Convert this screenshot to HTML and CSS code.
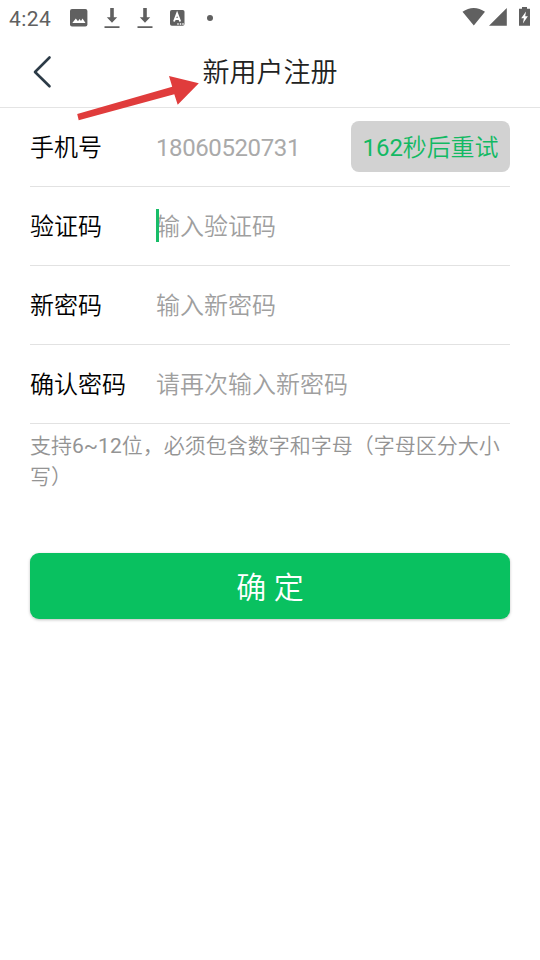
FILE: index.html
```html
<!DOCTYPE html>
<html lang="zh-CN">
<head>
<meta charset="utf-8">
<title>新用户注册</title>
<link rel="stylesheet" href="styles.css">
</head>
<body>
<div class="status">
  <span class="clock">4:24</span>
  <svg class="photo" width="18" height="18" viewBox="0 0 18 18"><rect width="17.4" height="17.4" rx="2" fill="#606060"/><path d="m2.300 14 3.500-4.500L8 12.300 9.500 10l1.500 2 1.500-2.500 3 4.500z" fill="#fff"/></svg>
  <svg class="download" width="16" height="21" viewBox="0 0 16 21"><path d="M6.200 0h3.600v9.300h3.400L8 14.700 2.800 9.300h3.400zM.5 18.200h15V20H.5z" fill="#606060"/></svg>
  <svg class="download" width="16" height="21" viewBox="0 0 16 21"><path d="M6.200 0h3.600v9.300h3.400L8 14.700 2.800 9.300h3.400zM.5 18.200h15V20H.5z" fill="#606060"/></svg>
  <svg class="keyboard" width="15" height="16" viewBox="0 0 15 16"><rect width="14.5" height="15.7" rx="1.8" fill="#606060"/><path d="m4 11.500 3.100-8 3.100 8M5 9h4.200" fill="none" stroke="#fff" stroke-width="1.900"/><path d="M7.300 13.300h1.400v1.400H7.300zm2.500 0h1.400v1.400H9.800zm2.500 0h1.400v1.400h-1.400z" fill="#fff"/></svg>
  <span class="dot"></span>
  <svg class="signals" width="68" height="22" viewBox="0 0 68 22"><path d="M.500 4.700C7.500-.4 16-.4 23 4.700L11.800 18.400zM27 18.800 44.800 1v17.800zM57 1.700h3V0h5v1.700h3v17.100H57z" fill="#606060"/><path d="m64 4.500-4.800 6.700h2.700l-1 5.200 5-7.200h-2.700z" fill="#fff"/></svg>
</div>
<header class="header">
  <svg class="back" width="20" height="34" viewBox="0 0 20 34"><path d="M17.500 2.500 3 17l14.500 14.300" fill="none" stroke="#2c3b47" stroke-width="2.600" stroke-linecap="round" stroke-linejoin="round"/></svg>
  <h1 class="title">新用户注册</h1>
</header>
<svg class="pointer" width="124" height="48" viewBox="0 0 124 48"><path d="m2.200 41.100 95-27.300L94 3l29.800 7.200-21.100 21.500-3.400-10.400-95.600 26z" fill="#e03c3c"/></svg>
<main class="form">
  <div class="row"><span class="label">手机号</span><span class="field number">18060520731</span><button class="retry"><span class="count">162</span>秒后重试</button></div>
  <div class="row"><span class="label">验证码</span><span class="field focused">输入验证码</span></div>
  <div class="row"><span class="label">新密码</span><span class="field">输入新密码</span></div>
  <div class="row"><span class="label">确认密码</span><span class="field">请再次输入新密码</span></div>
  <p class="hint">支持<span class="count">6~12</span>位，必须包含数字和字母（字母区分大小写）</p>
  <button class="submit">确 定</button>
</main>
</body>
</html>
```
FILE: styles.css
```css
* { box-sizing: border-box; }
body {
  margin: 0;
  min-height: 960px;
  position: relative;
  background: #fff;
  font-family: Roboto, "Noto Sans CJK SC DemiLight", "Noto Sans CJK SC", sans-serif;
  font-weight: 350;
}
svg { display: block; flex: none; }
button { border: 0; font-family: inherit; font-weight: inherit; }
.status { display: flex; align-items: center; height: 36px; padding: 0 10px 0 9px; }
.clock { width: 60.500px; color: #606060; font-size: 21px; font-weight: 400; letter-spacing: .4px; line-height: 24px; padding-top: 2px; }
.photo { margin-right: 16px; }
.download { margin-right: 17px; }
.keyboard { margin-right: 22px; }
.dot { width: 6px; height: 6px; border-radius: 50%; background: #606060; }
.signals { margin: 0 0 0 auto; }
.header {
  height: 72px;
  border-bottom: 1px solid #e4e4e4;
  padding: 0 32px;
  display: grid;
  grid-template-columns: 20px 1fr 20px;
  align-items: center;
}
.title { margin: 0; padding-top: 2px; text-align: center; color: #222; font-size: 27px; line-height: 40px; font-weight: 350; }
.pointer { position: absolute; left: 75px; top: 73px; }
.form { padding: 0 30px; }
.row { height: 79px; display: flex; align-items: center; padding-top: 3px; border-bottom: 1px solid #e2e2e2; font-size: 24px; line-height: 33px; }
.label { width: 126px; color: #000; }
.field { flex: 1; color: #9f9f9f; }
.number { letter-spacing: -.4px; font-weight: 400; color: #aaa; }
.count { font-weight: 400; }
.focused { position: relative; }
.focused::before { content: ""; position: absolute; left: 0; top: -2px; width: 3px; height: 33px; background: #18bd68; }
.retry { width: 159px; height: 51px; margin-top: -5px; padding: 0 0 1px; border-radius: 8px; background: #d2d2d2; color: #12b963; font-size: 24px; letter-spacing: -.1px; }
.hint { margin: 7px 0 0; color: #949494; font-size: 21px; line-height: 31px; }
.submit {
  display: block;
  width: 100%;
  height: 66px;
  margin-top: 60px;
  padding: 0 0 3px;
  border-radius: 9px;
  background: #09c160;
  color: #fff;
  font-size: 30px;
  box-shadow: 0 1px 3px rgba(0, 0, 0, .25);
}
```
